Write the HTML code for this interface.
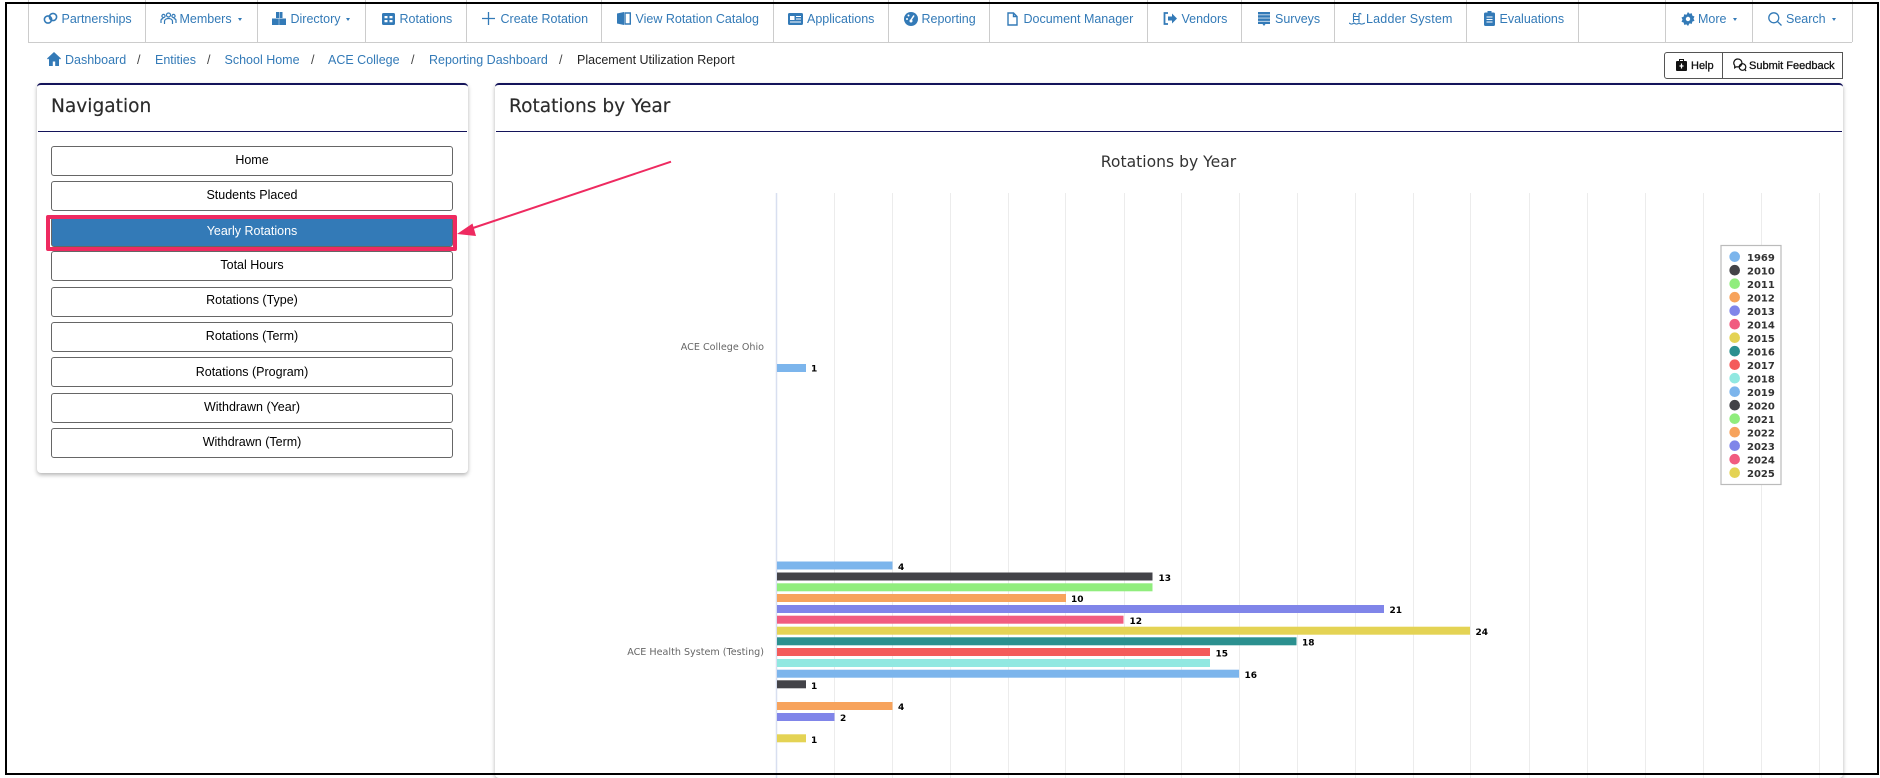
<!DOCTYPE html>
<html><head><meta charset="utf-8"><style>
html,body{margin:0;padding:0;background:#fff;width:1880px;height:778px;overflow:hidden}
body{position:relative;font-family:"Liberation Sans",Arial,sans-serif}
.a{position:absolute;white-space:nowrap}
.n{position:absolute;top:11.500px;font-size:12.500px;line-height:15px;color:#337ab7;white-space:nowrap}
.s{position:absolute;top:0;width:1px;height:42px;background:#ccc}
.i{position:absolute}
.c{position:absolute;top:17.500px;width:0;height:0;border-left:2.500px solid transparent;border-right:2.500px solid transparent;border-top:3px solid #337ab7}
.b{position:absolute;top:52.500px;font-size:12.500px;line-height:15px;color:#337ab7;white-space:nowrap}
.card{position:absolute;background:#fff;box-sizing:border-box;border-top:2px solid #14145a;border-radius:4px;box-shadow:0 2px 4px rgba(0,0,0,.3)}
.hd{position:absolute;font-family:"DejaVu Sans",sans-serif;font-size:18.600px;color:#2b2b2b;white-space:nowrap;line-height:22px;-webkit-text-stroke:.15px #2b2b2b}
.ln{position:absolute;height:1px;background:#14145a}
.btn{position:absolute;left:51px;width:402px;height:30px;box-sizing:border-box;border:1px solid #666;border-radius:3px;background:#fff;color:#000;font-size:12.500px;line-height:26px;text-align:center}
</style></head><body>

<div class="a" style="left:28px;top:42px;width:1824px;height:1px;background:#ccc"></div>
<div class="s" style="left:28px"></div><div class="s" style="left:145px"></div><div class="s" style="left:257px"></div><div class="s" style="left:365px"></div><div class="s" style="left:466px"></div><div class="s" style="left:601px"></div><div class="s" style="left:773px"></div><div class="s" style="left:888px"></div><div class="s" style="left:989px"></div><div class="s" style="left:1147px"></div><div class="s" style="left:1241px"></div><div class="s" style="left:1334px"></div><div class="s" style="left:1466px"></div><div class="s" style="left:1578px"></div><div class="s" style="left:1665px"></div><div class="s" style="left:1752px"></div><div class="s" style="left:1852px"></div>

<svg class="i" style="left:43px;top:12px" width="15" height="13" viewBox="0 0 15 13" fill="none" stroke="#337ab7" stroke-width="1.600"><circle cx="5" cy="7.500" r="3.600"/><circle cx="10" cy="5" r="3.600"/></svg>
<span class="n" style="left:61.500px">Partnerships</span>
<svg class="i" style="left:160px;top:12px" width="17" height="13" viewBox="0 0 17 13" fill="none" stroke="#337ab7" stroke-width="1.200"><circle cx="8.500" cy="3" r="2"/><circle cx="3.500" cy="4" r="1.600"/><circle cx="13.500" cy="4" r="1.600"/><path d="M4.500 12V9.500c0-2 2-3 4-3s4 1 4 3V12M1 11V8.500C1 7.200 2 6.600 3.300 6.600M16 11V8.500c0-1.300-1-1.900-2.300-1.900"/></svg>
<span class="n" style="left:179.500px">Members</span><span class="c" style="left:238px"></span>
<svg class="i" style="left:272px;top:12px" width="14" height="13" viewBox="0 0 14 13" fill="#337ab7"><rect x="4" y="0" width="3" height="6"/><rect x="7.500" y="0" width="3" height="6"/><rect x="0" y="6.500" width="6.800" height="6.500"/><rect x="7.200" y="6.500" width="6.800" height="6.500"/></svg>
<span class="n" style="left:290.500px">Directory</span><span class="c" style="left:346px"></span>
<svg class="i" style="left:382px;top:13px" width="13" height="12" viewBox="0 0 13 12"><rect width="13" height="12" rx="1.500" fill="#337ab7"/><path d="M2.500 3h3v2.200h-3zM7.500 3h3v2.200h-3zM2.500 7h3v2.200h-3zM7.500 7h3v2.200h-3z" fill="#fff"/></svg>
<span class="n" style="left:399.500px">Rotations</span>
<svg class="i" style="left:482px;top:12px" width="13" height="13" viewBox="0 0 13 13" stroke="#337ab7" stroke-width="1.300"><path d="M6.500 0v13M0 6.500h13"/></svg>
<span class="n" style="left:500.500px">Create Rotation</span>
<svg class="i" style="left:617px;top:12px" width="14" height="13" viewBox="0 0 14 13"><path d="M0 1.500L7 0v13L0 11.500z" fill="#337ab7"/><path d="M8 1h5.300v11H8z" fill="none" stroke="#337ab7" stroke-width="1.400"/></svg>
<span class="n" style="left:635.500px">View Rotation Catalog</span>
<svg class="i" style="left:788px;top:13px" width="15" height="12" viewBox="0 0 15 12"><rect width="15" height="12" rx="1.500" fill="#337ab7"/><rect x="2" y="3" width="4.500" height="4" fill="#fff"/><path d="M8 3.500h5M8 6h5M2 9h11" stroke="#fff" stroke-width="1"/></svg>
<span class="n" style="left:807px">Applications</span>
<svg class="i" style="left:904px;top:12px" width="14" height="14" viewBox="0 0 14 14"><circle cx="7" cy="7" r="7" fill="#337ab7"/><path d="M7 8L10 3.500" stroke="#fff" stroke-width="1.500"/><circle cx="3" cy="7" r="1" fill="#fff"/><circle cx="4.500" cy="3.500" r="1" fill="#fff"/><circle cx="7" cy="9" r="1.500" fill="#fff"/></svg>
<span class="n" style="left:921.500px">Reporting</span>
<svg class="i" style="left:1007px;top:12px" width="11" height="14" viewBox="0 0 11 14" fill="none" stroke="#337ab7" stroke-width="1.400"><path d="M1 1h5.500L10 4.500V13H1zM6.500 1v3.500H10"/></svg>
<span class="n" style="left:1023.500px">Document Manager</span>
<svg class="i" style="left:1163px;top:12px" width="14" height="13" viewBox="0 0 14 13"><path d="M5 1H1.500v11H5" fill="none" stroke="#337ab7" stroke-width="1.800"/><path d="M5 4.500h4V1.500l5 5-5 5V8.500H5z" fill="#337ab7"/></svg>
<span class="n" style="left:1181.500px">Vendors</span>
<svg class="i" style="left:1258px;top:12px" width="12" height="14" viewBox="0 0 12 14" fill="#337ab7"><rect y="0" width="12" height="2.500"/><rect y="3.200" width="12" height="2.500"/><rect y="6.400" width="12" height="2.500"/><path d="M0 9.600h12V12H7.500L6 14 4.500 12H0z"/></svg>
<span class="n" style="left:1275px">Surveys</span>
<svg class="i" style="left:1349px;top:12px" width="16" height="14" viewBox="0 0 16 14" fill="none" stroke="#337ab7" stroke-width="1.100"><path d="M4.500 10V2.500C4.500 1 6.500 1 6.500 2.500M10 10V2.500C10 1 12 1 12 2.500M4.500 4.500H10M4.500 7.500H10M0 11c2 1.500 3 1.500 5 0 2 1.500 3 1.500 5 0 2 1.500 3 1.500 6 0"/></svg>
<span class="n" style="left:1366px;letter-spacing:.2px">Ladder System</span>
<svg class="i" style="left:1484px;top:11px" width="11" height="15" viewBox="0 0 11 15"><rect y="1.500" width="11" height="13.500" rx="1.500" fill="#337ab7"/><rect x="3.500" y="0" width="4" height="3" fill="#337ab7"/><path d="M2.500 6h6M2.500 8.500h6M2.500 11h6" stroke="#fff" stroke-width="1"/></svg>
<span class="n" style="left:1499.500px">Evaluations</span>
<svg class="i" style="left:1681px;top:12px" width="14" height="14" viewBox="0 0 14 14"><path d="M7 0l1.500 1.800 2.300-.5.500 2.300 2.200.9-1 2.100 1 2.100-2.200.9-.5 2.300-2.300-.5L7 14l-1.500-1.600-2.300.5-.5-2.300-2.200-.9 1-2.100-1-2.100 2.200-.9.500-2.300 2.300.5z" fill="#337ab7"/><circle cx="7" cy="7" r="2.200" fill="#fff"/></svg>
<span class="n" style="left:1698px">More</span><span class="c" style="left:1733px"></span>
<svg class="i" style="left:1767.500px;top:12px" width="14" height="14" viewBox="0 0 14 14" fill="none" stroke="#337ab7" stroke-width="1.300"><circle cx="5.800" cy="5.800" r="5"/><path d="M9.300 9.300L13.500 13.500"/></svg>
<span class="n" style="left:1786px">Search</span><span class="c" style="left:1832px"></span>

<svg class="i" style="left:47px;top:52px" width="14" height="14" viewBox="0 0 14 14" fill="#337ab7"><path d="M7 0L0 6.500l1 1L2 6.600V14h3.800V9.500h2.400V14H12V6.600l1 .9 1-1z"/></svg>
<span class="b" style="left:65px">Dashboard</span><span class="b" style="left:137px;color:#444">/</span>
<span class="b" style="left:155px">Entities</span><span class="b" style="left:207px;color:#444">/</span>
<span class="b" style="left:224.500px">School Home</span><span class="b" style="left:311px;color:#444">/</span>
<span class="b" style="left:328px">ACE College</span><span class="b" style="left:411px;color:#444">/</span>
<span class="b" style="left:429px">Reporting Dashboard</span><span class="b" style="left:559px;color:#444">/</span>
<span class="b" style="left:577px;color:#222">Placement Utilization Report</span>

<div class="a" style="left:1664px;top:52px;width:179px;height:27px;box-sizing:border-box;border:1px solid #555;border-radius:3px 0 0 3px"></div>
<div class="a" style="left:1722px;top:52px;width:1px;height:27px;background:#555"></div>
<svg class="i" style="left:1676px;top:59px" width="11" height="12" viewBox="0 0 11 12"><path d="M3.500 2V0.500h4V2" fill="none" stroke="#111" stroke-width="1"/><rect y="2" width="11" height="10" rx="1" fill="#111"/><path d="M5.500 4.500v5M3.500 7h4" stroke="#fff" stroke-width="1.200"/></svg>
<span class="a" style="left:1691px;top:58.500px;font-size:11px;line-height:15px;color:#111;-webkit-text-stroke:.3px #111">Help</span>
<svg class="i" style="left:1733px;top:58px" width="14" height="14" viewBox="0 0 14 14" fill="none" stroke="#111" stroke-width="1.200"><path d="M5 1a4 4 0 0 1 4 4 4 4 0 0 1-4 3.900H3L1.700 9.800V7.500A4 4 0 0 1 5 1z"/><circle cx="9.500" cy="9" r="3.300"/><path d="M12 11.500l1 1.500"/></svg>
<span class="a" style="left:1749px;top:58.500px;font-size:11px;line-height:15px;color:#111;-webkit-text-stroke:.3px #111">Submit Feedback</span>

<div class="card" style="left:37px;top:83px;width:431px;height:390px"></div>
<div class="ln" style="left:38px;top:131px;width:429px"></div>
<div class="hd" style="left:51px;top:96px">Navigation</div>
<div class="btn" style="top:146px">Home</div>
<div class="btn" style="top:181px">Students Placed</div>
<div class="btn" style="top:217px;background:#337ab7;color:#fff">Yearly Rotations</div>
<div class="btn" style="top:251px;line-height:27px">Total Hours</div>
<div class="btn" style="top:287px;line-height:25px">Rotations (Type)</div>
<div class="btn" style="top:322px;line-height:27px">Rotations (Term)</div>
<div class="btn" style="top:357px;line-height:28px">Rotations (Program)</div>
<div class="btn" style="top:393px">Withdrawn (Year)</div>
<div class="btn" style="top:428px">Withdrawn (Term)</div>
<div class="a" style="left:46px;top:214.500px;width:411px;height:36.500px;box-sizing:border-box;border:4px solid #ee2a60;border-radius:2px"></div>

<div class="card" style="left:495px;top:83px;width:1348px;height:695px"></div>
<div class="ln" style="left:496px;top:131px;width:1346px"></div>
<div class="hd" style="left:509px;top:96px">Rotations by Year</div>

<svg class="i" style="left:0;top:0" width="1880" height="778" viewBox="0 0 1880 778" font-family="'DejaVu Sans',sans-serif">
<g stroke="#ececec" stroke-width="1">
<path d="M834.500 193V778M892.500 193V778M950.500 193V778M1008.500 193V778M1065.500 193V778M1124.500 193V778M1181.500 193V778M1239.500 193V778M1297.500 193V778M1355.500 193V778M1413.500 193V778M1470.500 193V778M1529.500 193V778M1587.500 193V778M1645.500 193V778M1703.500 193V778M1761.500 193V778M1819.500 193V778"/>
</g>
<path d="M776.500 193V778" stroke="#d8dff0" stroke-width="1.500"/>
<text x="1168.500" y="167" text-anchor="middle" font-size="15.600" fill="#333">Rotations by Year</text>
<g font-size="9.600" fill="#666" text-anchor="end">
<text x="764" y="350">ACE College Ohio</text>
<text x="764" y="655">ACE Health System (Testing)</text>
</g>
<g>
<rect x="777" y="364" width="29" height="8" fill="#7cb5ec"/>
<rect x="777" y="561.500" width="115.500" height="8" fill="#7cb5ec"/>
<rect x="777" y="572.500" width="375.500" height="8" fill="#434348"/>
<rect x="777" y="583.300" width="375.500" height="8" fill="#90ed7d"/>
<rect x="777" y="594" width="289" height="8" fill="#f7a35c"/>
<rect x="777" y="605" width="607" height="8" fill="#8085e9"/>
<rect x="777" y="615.700" width="346.500" height="8" fill="#f15c80"/>
<rect x="777" y="626.700" width="693" height="8" fill="#e4d354"/>
<rect x="777" y="637.300" width="519.500" height="8" fill="#2b908f"/>
<rect x="777" y="648" width="433" height="8" fill="#f45b5b"/>
<rect x="777" y="659" width="433" height="8" fill="#91e8e1"/>
<rect x="777" y="669.700" width="462" height="8" fill="#7cb5ec"/>
<rect x="777" y="680.300" width="29" height="8" fill="#434348"/>
<rect x="777" y="702" width="115.500" height="8" fill="#f7a35c"/>
<rect x="777" y="713" width="57.500" height="8" fill="#8085e9"/>
<rect x="777" y="734.300" width="29" height="8" fill="#e4d354"/>
</g>
<g font-size="9" font-weight="700" fill="#000">
<text x="811" y="371.500">1</text>
<text x="898" y="570">4</text>
<text x="1158.500" y="581">13</text>
<text x="1071" y="602">10</text>
<text x="1389.500" y="613">21</text>
<text x="1129.500" y="624">12</text>
<text x="1475.500" y="635">24</text>
<text x="1302" y="645.500">18</text>
<text x="1215.500" y="656.500">15</text>
<text x="1244.500" y="678">16</text>
<text x="811" y="689">1</text>
<text x="898" y="710">4</text>
<text x="840" y="721">2</text>
<text x="811" y="743">1</text>
</g>
<rect x="1721" y="245.500" width="60" height="239" fill="#fff" stroke="#bbb" stroke-width="1.200"/>
<g>
<circle cx="1734.700" cy="256.700" r="5.300" fill="#7cb5ec"/><circle cx="1734.700" cy="270.200" r="5.300" fill="#434348"/><circle cx="1734.700" cy="283.700" r="5.300" fill="#90ed7d"/><circle cx="1734.700" cy="297.200" r="5.300" fill="#f7a35c"/><circle cx="1734.700" cy="310.700" r="5.300" fill="#8085e9"/><circle cx="1734.700" cy="324.200" r="5.300" fill="#f15c80"/><circle cx="1734.700" cy="337.700" r="5.300" fill="#e4d354"/><circle cx="1734.700" cy="351.200" r="5.300" fill="#2b908f"/><circle cx="1734.700" cy="364.700" r="5.300" fill="#f45b5b"/><circle cx="1734.700" cy="378.200" r="5.300" fill="#91e8e1"/><circle cx="1734.700" cy="391.700" r="5.300" fill="#7cb5ec"/><circle cx="1734.700" cy="405.200" r="5.300" fill="#434348"/><circle cx="1734.700" cy="418.700" r="5.300" fill="#90ed7d"/><circle cx="1734.700" cy="432.200" r="5.300" fill="#f7a35c"/><circle cx="1734.700" cy="445.700" r="5.300" fill="#8085e9"/><circle cx="1734.700" cy="459.200" r="5.300" fill="#f15c80"/><circle cx="1734.700" cy="472.700" r="5.300" fill="#e4d354"/>
</g>
<g font-size="10" font-weight="700" fill="#333">
<text x="1747" y="261">1969</text><text x="1747" y="274.500">2010</text><text x="1747" y="288">2011</text><text x="1747" y="301.500">2012</text><text x="1747" y="315">2013</text><text x="1747" y="328.500">2014</text><text x="1747" y="342">2015</text><text x="1747" y="355.500">2016</text><text x="1747" y="369">2017</text><text x="1747" y="382.500">2018</text><text x="1747" y="396">2019</text><text x="1747" y="409.500">2020</text><text x="1747" y="423">2021</text><text x="1747" y="436.500">2022</text><text x="1747" y="450">2023</text><text x="1747" y="463.500">2024</text><text x="1747" y="477">2025</text>
</g>
<path d="M671 161.700L470 229" stroke="#ee2a60" stroke-width="2" fill="none"/>
<path d="M457 234L472.500 223.500L476 236z" fill="#ee2a60"/>
</svg>

<div class="a" style="left:5px;top:2px;width:1873.500px;height:773.300px;box-sizing:border-box;border:2.500px solid #000;border-top-width:2.300px"></div>
</body></html>
